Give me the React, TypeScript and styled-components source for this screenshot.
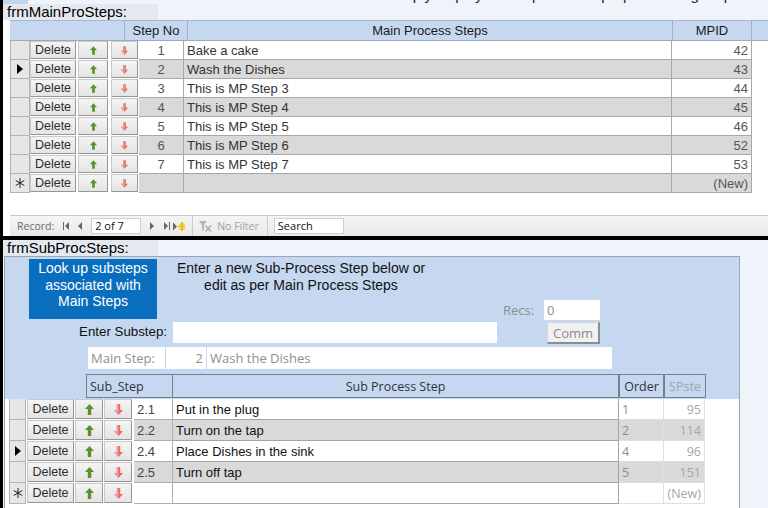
import React from "react";
import styled, { createGlobalStyle } from "styled-components";

const GlobalStyle = createGlobalStyle`
  html, body { margin: 0; padding: 0; }
  body { background: #eef4f9; font-family: "Liberation Sans", Arial, sans-serif; overflow: hidden; }
  * { box-sizing: border-box; }
`;

const ARIAL = `"Liberation Sans", Arial, sans-serif`;
const CAL = `"Open Sans", "Noto Sans", sans-serif`;

const Page = styled.div`
  width: 768px;
  height: 508px;
  overflow: hidden;
  border-left: 3px solid #000;
  display: flex;
  flex-direction: column;
  background: #eef4f9;
`;

const TopStrip = styled.div`
  height: 4px;
  display: flex;
  overflow: hidden;
  flex: none;
`;
const TopTab = styled.div`
  width: 97px;
  background: #c3d6ee;
`;
const TopText = styled.div`
  flex: 1;
  font-size: 15px;
  line-height: 15px;
  margin-top: -13px;
  padding-left: 240px;
  color: #222;
  white-space: nowrap;
`;

const FormLabel = styled.div`
  height: 16px;
  width: 155px;
  flex: none;
  background: #e3e9ef;
  font-family: ${ARIAL};
  font-size: 15px;
  line-height: 16px;
  padding-left: 4px;
  color: #000;
`;

/* ---------- main datasheet ---------- */
const MainBody = styled.div`
  background: #fff;
  display: flex;
  flex-direction: column;
  flex: none;
  padding-left: 7px;
`;

const HeadRow = styled.div`
  height: 21px;
  display: flex;
  background: #c5d8f0;
  border-top: 1px solid #a9b6c4;
  border-bottom: 1px solid #9aabbd;
`;
const HeadCell = styled.div<{ $w?: number }>`
  ${(p) => (p.$w ? `width:${p.$w}px; flex:none;` : "flex:1;")}
  border-right: 1px solid #a3b1c0;
  font-size: 13px;
  line-height: 19px;
  text-align: center;
  color: #1a1a1a;
  &:first-child, &:last-child { border-right: none; }
`;
const HeadSpacer = styled.div<{ $w: number }>`
  width: ${(p) => p.$w}px;
  flex: none;
  border-right: 1px solid #a3b1c0;
`;

const Row = styled.div<{ $h: number }>`
  height: ${(p) => p.$h}px;
  display: flex;
  flex: none;
  background: #fff;
`;

const Selector = styled.div<{ $w: number; $ml?: number }>`
  width: ${(p) => p.$w}px;
  margin-left: ${(p) => p.$ml ?? 0}px;
  flex: none;
  background: #e6e6e6;
  border: 1px solid #b3b3b3;
  border-top: none;
  display: flex;
  align-items: center;
  justify-content: center;
`;

const Btn = styled.div<{ $w: number; $ml: number }>`
  width: ${(p) => p.$w}px;
  margin-left: ${(p) => p.$ml}px;
  height: calc(100% - 1px);
  flex: none;
  display: flex;
  align-items: center;
  justify-content: center;
  background: linear-gradient(#f4f4f4, #e4e4e4);
  border: 1px solid #cacaca;
  border-right-color: #969696;
  border-bottom-color: #969696;
  font-family: ${ARIAL};
  font-size: 12.5px;
  color: #2e2e2e;
`;

const Cell = styled.div<{
  $w?: number;
  $ml?: number;
  $alt: boolean;
  $align?: string;
  $color?: string;
  $font?: string;
  $size?: number;
  $bc?: string;
}>`
  ${(p) => (p.$w ? `width:${p.$w}px; flex:none;` : "flex:1;")}
  margin-left: ${(p) => p.$ml ?? 0}px;
  background: ${(p) => (p.$alt ? "#d9d9d9" : "#fff")};
  border-bottom: 1px solid ${(p) => p.$bc ?? "#a8a8a8"};
  border-right: 1px solid ${(p) => p.$bc ?? "#a8a8a8"};
  text-align: ${(p) => p.$align ?? "left"};
  color: ${(p) => p.$color ?? "#333"};
  font-family: ${(p) => p.$font ?? ARIAL};
  font-size: ${(p) => p.$size ?? 13}px;
  padding: 0 3px;
  white-space: nowrap;
  overflow: hidden;
  display: flex;
  align-items: center;
  justify-content: ${(p) =>
    p.$align === "right" ? "flex-end" : p.$align === "center" ? "center" : "flex-start"};
`;

const Filler = styled.div`
  flex: 1;
  background: #fff;
`;

const Blank = styled.div<{ $h: number }>`
  height: ${(p) => p.$h}px;
  flex: none;
`;

/* ---------- nav bar ---------- */
const NavBar = styled.div`
  height: 21px;
  flex: none;
  display: flex;
  align-items: center;
  background: linear-gradient(#f5f5f5, #e9e9e9);
  border-top: 1px solid #c9c9c9;
  font-family: ${CAL};
  font-size: 10.5px;
  color: #6a6a6a;
`;
const NavText = styled.span<{ $ml: number; $color?: string }>`
  margin-left: ${(p) => p.$ml}px;
  color: ${(p) => p.$color ?? "#6a6a6a"};
  white-space: nowrap;
`;
const NavIcon = styled.span<{ $ml: number }>`
  margin-left: ${(p) => p.$ml}px;
  display: flex;
  align-items: center;
`;
const NavBox = styled.div<{ $w: number; $ml: number }>`
  width: ${(p) => p.$w}px;
  margin-left: ${(p) => p.$ml}px;
  height: 16px;
  background: #fff;
  border: 1px solid #cfcfcf;
  color: #111;
  font-size: 11px;
  line-height: 14px;
  padding-left: 3px;
`;
const NavSep = styled.div<{ $ml: number }>`
  margin-left: ${(p) => p.$ml}px;
  width: 1px;
  height: 100%;
  background: #cdcdcd;
`;

const BlackLine = styled.div`
  height: 4px;
  flex: none;
  background: #000;
`;

/* ---------- sub form ---------- */
const SubForm = styled.div`
  margin-left: 1px;
  width: 736px;
  flex: 1;
  border: 1px solid #9aa6b2;
  border-bottom: none;
  display: flex;
  flex-direction: column;
  background: #fff;
`;

const FormHeader = styled.div`
  height: 142px;
  flex: none;
  background: #c5d8f0;
  display: flex;
  flex-direction: column;
  padding-top: 1px;
`;

const HRow = styled.div<{ $h: number; $mt?: number }>`
  height: ${(p) => p.$h}px;
  margin-top: ${(p) => p.$mt ?? 0}px;
  display: flex;
  flex: none;
`;

const LookupButton = styled.div`
  margin-left: 24px;
  margin-top: 1px;
  width: 128px;
  height: 60px;
  background: #0a6ebe;
  color: #fff;
  font-family: ${ARIAL};
  font-size: 14px;
  line-height: 16.5px;
  text-align: center;
  padding-top: 1px;
`;

const Instructions = styled.div`
  margin-left: 13px;
  width: 262px;
  padding-top: 2px;
  font-family: ${ARIAL};
  font-size: 14px;
  line-height: 16.5px;
  text-align: center;
  color: #111;
`;

const RecsGroup = styled.div`
  margin-left: 71px;
  align-self: flex-end;
  display: flex;
  align-items: center;
  height: 20px;
`;
const GreyLabel = styled.span`
  font-family: ${CAL};
  font-size: 13px;
  color: #8f8f8f;
  width: 41px;
`;
const Field = styled.div<{ $w: number; $h: number; $ml?: number; $align?: string; $color?: string; $mt?: number }>`
  width: ${(p) => p.$w}px;
  height: ${(p) => p.$h}px;
  margin-left: ${(p) => p.$ml ?? 0}px;
  margin-top: ${(p) => p.$mt ?? 0}px;
  flex: none;
  background: #fff;
  font-family: ${CAL};
  font-size: 13px;
  color: ${(p) => p.$color ?? "#8f8f8f"};
  display: flex;
  align-items: center;
  justify-content: ${(p) => (p.$align === "right" ? "flex-end" : "flex-start")};
  padding: 0 3px;
  white-space: nowrap;
`;

const SubstepLabel = styled.div`
  margin-left: 74px;
  width: 94px;
  height: 22px;
  padding-right: 6px;
  text-align: right;
  font-family: ${ARIAL};
  font-size: 13.3px;
  line-height: 20px;
  color: #111;
`;

const CommButton = styled.div`
  margin-left: 50px;
  width: 53px;
  height: 22px;
  background: #f1f1f1;
  border: 1px solid #d8d8d8;
  border-right: 2px solid #8c8c8c;
  border-bottom: 2px solid #8c8c8c;
  font-family: ${CAL};
  font-size: 13px;
  color: #8a8a8a;
  display: flex;
  align-items: center;
  justify-content: center;
`;

const ColHead = styled.div<{ $w: number; $ml?: number; $align?: string; $color?: string }>`
  width: ${(p) => p.$w}px;
  margin-left: ${(p) => p.$ml ?? 0}px;
  flex: none;
  height: 24px;
  border: 1px solid #718194;
  font-family: ${CAL};
  font-size: 12.5px;
  color: ${(p) => p.$color ?? "#333"};
  display: flex;
  align-items: center;
  justify-content: ${(p) => (p.$align === "left" ? "flex-start" : "center")};
  padding: 0 3px;
`;

const SubFiller = styled.div`
  flex: 1;
  background: #fff;
`;

/* ---------- icons ---------- */
const UpArrow = ({ w, h }: { w: number; h: number }) => (
  <svg width={w} height={h} viewBox="0 0 10 12">
    <path d="M5 0 L10 5.5 L6.9 5.5 L6.9 12 L3.1 12 L3.1 5.5 L0 5.5 Z" fill="#5d8f2c" />
  </svg>
);
const DownArrow = ({ w, h }: { w: number; h: number }) => (
  <svg width={w} height={h} viewBox="0 0 10 12">
    <path d="M5 12 L10 6.5 L6.9 6.5 L6.9 0 L3.1 0 L3.1 6.5 L0 6.5 Z" fill="#e46a6a" />
    <path d="M5 12 L0 6.5 L3.1 6.5 L3.1 0 L5 0 Z" fill="#f19a9a" />
  </svg>
);
const Pointer = () => (
  <svg width="6" height="10" viewBox="0 0 6 10">
    <path d="M0 0 L6 5 L0 10 Z" fill="#000" />
  </svg>
);
const Star = () => (
  <svg width="10" height="10" viewBox="0 0 10 10">
    <g stroke="#222" strokeWidth="1">
      <line x1="5" y1="0" x2="5" y2="10" />
      <line x1="0.7" y1="2.5" x2="9.3" y2="7.5" />
      <line x1="0.7" y1="7.5" x2="9.3" y2="2.5" />
    </g>
  </svg>
);
const NavFirst = () => (
  <svg width="6" height="8" viewBox="0 0 6 8">
    <rect x="0" y="0" width="1" height="8" fill="#666" />
    <path d="M6 0 L2 4 L6 8 Z" fill="#666" />
  </svg>
);
const NavPrev = () => (
  <svg width="4" height="8" viewBox="0 0 4 8">
    <path d="M4 0 L0 4 L4 8 Z" fill="#666" />
  </svg>
);
const NavNext = () => (
  <svg width="4" height="8" viewBox="0 0 4 8">
    <path d="M0 0 L4 4 L0 8 Z" fill="#666" />
  </svg>
);
const NavLast = () => (
  <svg width="6" height="8" viewBox="0 0 6 8">
    <path d="M0 0 L4 4 L0 8 Z" fill="#666" />
    <rect x="5" y="0" width="1" height="8" fill="#666" />
  </svg>
);
const NavNew = () => (
  <svg width="12" height="9" viewBox="0 0 12 9">
    <path d="M0 0.5 L4 4.5 L0 8.5 Z" fill="#666" />
    <g fill="#f2c200">
      <rect x="8" y="0" width="2" height="9" />
      <rect x="5" y="3.5" width="7" height="2" />
      <rect x="6" y="1.5" width="6" height="1" />
      <rect x="6" y="6.5" width="6" height="1" />
    </g>
  </svg>
);
const FilterIcon = () => (
  <svg width="13" height="11" viewBox="0 0 13 11">
    <path d="M0 0 H8 L5 4 V9 L3 10 V4 Z" fill="#b4b4b4" />
    <path d="M6.5 4.5 L12 10.5 M12 4.5 L6.5 10.5" stroke="#a8a8a8" strokeWidth="1.3" />
  </svg>
);

/* ---------- data ---------- */
const mainRows = [
  { n: "1", t: "Bake a cake", id: "42" },
  { n: "2", t: "Wash the Dishes", id: "43", cur: true },
  { n: "3", t: "This is MP Step 3", id: "44" },
  { n: "4", t: "This is MP Step 4", id: "45" },
  { n: "5", t: "This is MP Step 5", id: "46" },
  { n: "6", t: "This is MP Step 6", id: "52" },
  { n: "7", t: "This is MP Step 7", id: "53" },
  { n: "", t: "", id: "(New)", isNew: true },
];

const subRows = [
  { s: "2.1", t: "Put in the plug", o: "1", id: "95" },
  { s: "2.2", t: "Turn on the tap", o: "2", id: "114" },
  { s: "2.4", t: "Place Dishes in the sink", o: "4", id: "96", cur: true },
  { s: "2.5", t: "Turn off tap", o: "5", id: "151" },
  { s: "", t: "", o: "", id: "(New)", isNew: true },
];

export default function App() {
  return (
    <>
      <GlobalStyle />
      <Page>
        <TopStrip>
          <TopTab />
          <TopText>Use the arrows to simply display the steps in their proper running sequence</TopText>
        </TopStrip>
        <FormLabel>frmMainProSteps:</FormLabel>
        <MainBody>
          <HeadRow>
            <HeadSpacer $w={115} />
            <HeadCell $w={63}>Step No</HeadCell>
            <HeadCell $w={485}>Main Process Steps</HeadCell>
            <HeadCell $w={79}>MPID</HeadCell>
            <HeadCell />
          </HeadRow>
          {mainRows.map((r, i) => {
            const alt = i % 2 === 1;
            return (
              <Row key={i} $h={19}>
                <Selector $w={20}>
                  {r.cur ? <Pointer /> : r.isNew ? <Star /> : null}
                </Selector>
                <Btn $w={46} $ml={0}>Delete</Btn>
                <Btn $w={30} $ml={2}>
                  <UpArrow w={7} h={9} />
                </Btn>
                <Btn $w={27} $ml={3}>
                  <DownArrow w={7} h={9} />
                </Btn>
                <Cell $w={45} $ml={1} $alt={alt} $align="center" $color="#555">
                  {r.n}
                </Cell>
                <Cell $w={488} $alt={alt} $color="#333">
                  {r.t}
                </Cell>
                <Cell $w={80} $alt={alt} $align="right" $color="#555">
                  {r.id}
                </Cell>
                <Filler />
              </Row>
            );
          })}
          <Blank $h={22} />
          <NavBar>
            <NavText $ml={7}>Record:</NavText>
            <NavIcon $ml={9}>
              <NavFirst />
            </NavIcon>
            <NavIcon $ml={9}>
              <NavPrev />
            </NavIcon>
            <NavBox $w={50} $ml={9}>2 of 7</NavBox>
            <NavIcon $ml={9}>
              <NavNext />
            </NavIcon>
            <NavIcon $ml={10}>
              <NavLast />
            </NavIcon>
            <NavIcon $ml={3}>
              <NavNew />
            </NavIcon>
            <NavSep $ml={7} />
            <NavIcon $ml={6}>
              <FilterIcon />
            </NavIcon>
            <NavText $ml={5} $color="#a2a2a2">
              No Filter
            </NavText>
            <NavSep $ml={8} />
            <NavBox $w={70} $ml={6}>Search</NavBox>
          </NavBar>
        </MainBody>
        <BlackLine />
        <FormLabel>frmSubProcSteps:</FormLabel>
        <SubForm>
          <FormHeader>
            <HRow $h={62}>
              <LookupButton>
                Look up substeps
                <br />
                associated with
                <br />
                Main Steps
              </LookupButton>
              <Instructions>
                Enter a new Sub-Process Step below or
                <br />
                edit as per Main Process Steps
              </Instructions>
              <RecsGroup>
                <GreyLabel>Recs:</GreyLabel>
                <Field $w={56} $h={20}>0</Field>
              </RecsGroup>
            </HRow>
            <HRow $h={22} $mt={2}>
              <SubstepLabel>Enter Substep:</SubstepLabel>
              <Field $w={324} $h={21} />
              <CommButton>Comm</CommButton>
            </HRow>
            <HRow $h={22} $mt={3}>
              <Field $w={77} $h={22} $ml={83}>
                Main Step:
              </Field>
              <Field $w={40} $h={22} $ml={1} $align="right">
                2
              </Field>
              <Field $w={405} $h={22} $ml={1}>
                Wash the Dishes
              </Field>
            </HRow>
            <HRow $h={24} $mt={5}>
              <ColHead $w={87} $ml={81} $align="left">
                Sub_Step
              </ColHead>
              <ColHead $w={447} $ml={-1}>
                Sub Process Step
              </ColHead>
              <ColHead $w={45}>Order</ColHead>
              <ColHead $w={42} $color="#a3a3a3">
                SPste
              </ColHead>
            </HRow>
          </FormHeader>
          {subRows.map((r, i) => {
            const alt = i % 2 === 1;
            return (
              <Row key={i} $h={21}>
                <Selector $w={17} $ml={4}>
                  {r.cur ? <Pointer /> : r.isNew ? <Star /> : null}
                </Selector>
                <Btn $w={47} $ml={1}>Delete</Btn>
                <Btn $w={28} $ml={1}>
                  <UpArrow w={9} h={11} />
                </Btn>
                <Btn $w={28} $ml={1}>
                  <DownArrow w={9} h={11} />
                </Btn>
                <Cell $w={39} $ml={2} $alt={alt} $color="#444" $size={13} $bc="#b0b0b0">
                  {r.s}
                </Cell>
                <Cell $w={446} $alt={alt} $color="#111" $size={13} $bc="#a4a4a4">
                  {r.t}
                </Cell>
                <Cell $w={45} $alt={alt} $font={CAL} $size={12.5} $color="#8c8c8c" $bc="#e5dfcf">
                  {r.o}
                </Cell>
                <Cell $w={41} $alt={alt} $font={CAL} $size={12.5} $align="right" $color="#a6a6a6" $bc="#e5dfcf">
                  {r.id}
                </Cell>
                <SubFiller />
              </Row>
            );
          })}
          <SubFiller />
        </SubForm>
      </Page>
    </>
  );
}
